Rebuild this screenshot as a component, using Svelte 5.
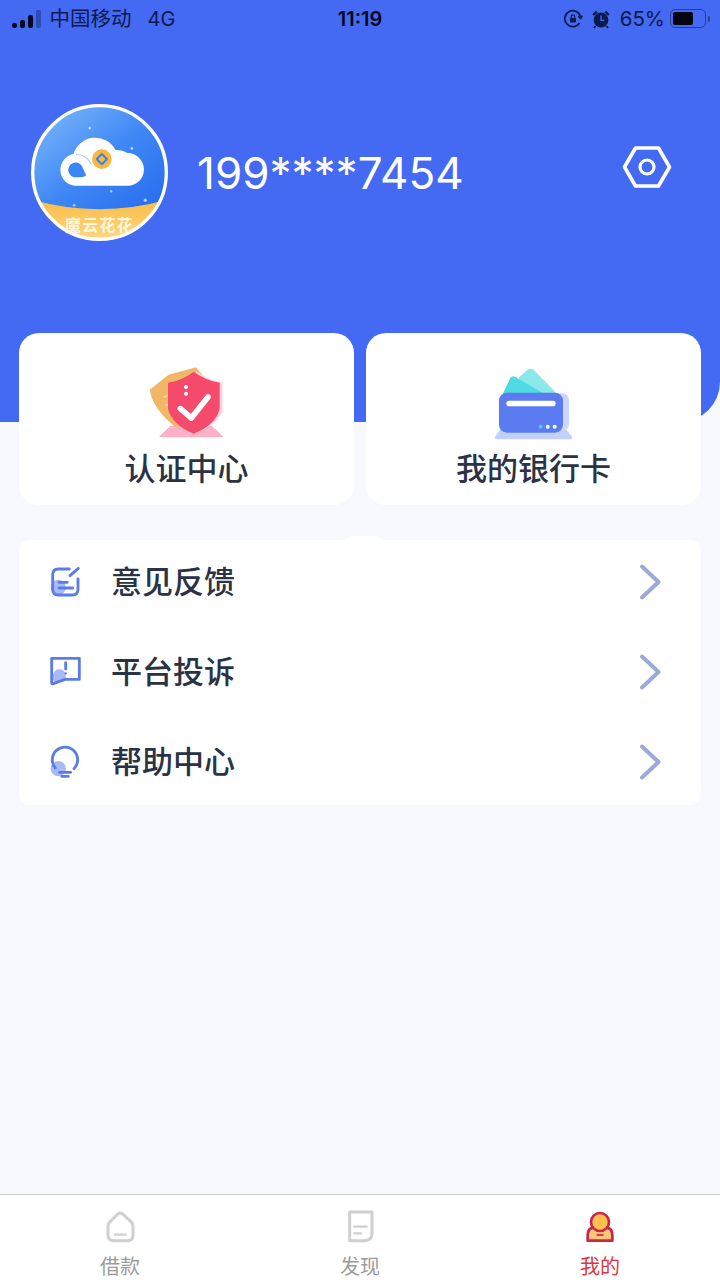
<script lang="ts">
  const menu = ['意见反馈', '平台投诉', '帮助中心'];
</script>

<div class="page">
  <header class="hero">
    <div class="status">
      <div class="status-left">
        <div class="signal"><i class="b1"></i><i class="b2"></i><i class="b3"></i><i class="b4"></i></div>
        <span class="carrier">中国移动</span>
        <span class="net">4G</span>
      </div>
      <div class="time">11:19</div>
      <div class="status-right">
        <svg class="st-ico" width="20" height="20" viewBox="0 0 20 20" fill="none" stroke="#0b1a4d" stroke-width="1.7">
          <path d="M16.5 14A8 8 0 1 1 17.6 8" />
          <path d="M15.2 7.4l2.6 2.2 1.6-3" stroke-width="1.4" />
          <rect x="7" y="9" width="6" height="4.6" rx="1" fill="#0b1a4d" stroke="none" />
          <path d="M8.3 9V7.6a1.7 1.7 0 0 1 3.4 0V9" stroke-width="1.2" />
        </svg>
        <svg class="st-ico" width="20" height="20" viewBox="0 0 20 20">
          <circle cx="10" cy="11" r="7.4" fill="#0b1a4d" />
          <path d="M1.4 5.2 5 1.8 6.6 3.4 3 6.8zM18.6 5.2 15 1.8 13.4 3.4 17 6.8z" fill="#0b1a4d" />
          <path d="M4.6 17 3 19M15.4 17l1.6 2" stroke="#0b1a4d" stroke-width="1.7" />
          <path d="M10 6.5V11.4H13.4" fill="none" stroke="#4469f2" stroke-width="1.3" />
        </svg>
        <span class="pct">65%</span>
        <div class="battery"><div class="level"></div></div>
        <div class="nub"></div>
      </div>
    </div>

    <div class="profile">
      <svg class="avatar" width="137" height="137" viewBox="33 27 410 410">
        <defs>
          <linearGradient id="sky" x1="0.15" y1="0.05" x2="0.8" y2="0.85">
            <stop offset="0" stop-color="#74b2fb" />
            <stop offset="0.5" stop-color="#3f87f5" />
            <stop offset="1" stop-color="#2a6ef0" />
          </linearGradient>
          <linearGradient id="sand" x1="0" y1="0" x2="0" y2="1">
            <stop offset="0" stop-color="#f9bb45" />
            <stop offset="1" stop-color="#ffdc8a" />
          </linearGradient>
          <clipPath id="disc"><circle cx="238" cy="232" r="200" /></clipPath>
        </defs>
        <circle cx="238" cy="232" r="200" fill="url(#sky)" />
        <path clip-path="url(#disc)" d="M30 312Q238 372 446 312V450H30Z" fill="url(#sand)" />
        <circle cx="238" cy="232" r="200" fill="none" stroke="#fff" stroke-width="10" />
        <circle cx="209" cy="99" r="4" fill="#b9dcff" />
        <circle cx="335" cy="160" r="4" fill="#b9dcff" />
        <circle cx="273" cy="288" r="3.5" fill="#a9d0ff" />
        <circle cx="375" cy="315" r="5" fill="#a9d0ff" />
        <circle cx="162" cy="330" r="4" fill="#a9d0ff" />
        <path d="M165 272A48 48 0 0 1 160 177 68 68 0 0 1 286 165 58 58 0 0 1 322 174 49 49 0 0 1 322 272Z" fill="#fff" />
        <path d="M163 246A22 22 0 1 1 186 214L198 240Q192 246 182 246Z" fill="#3c85f5" />
        <path d="M168 178Q200 178 214 208" fill="none" stroke="#a9ccf9" stroke-width="3" />
        <circle cx="245" cy="192" r="31" fill="#f9b93c" stroke="#fff" stroke-width="3" />
        <rect x="231" y="178" width="28" height="28" rx="5" transform="rotate(45 245 192)" fill="#3a7ef2" />
        <rect x="237" y="184" width="16" height="16" rx="2" transform="rotate(45 245 192)" fill="#f9b93c" />
        <text class="brand" x="238" y="408" text-anchor="middle">魔云花花</text>
      </svg>
      <div class="phone">199****7454</div>
      <svg class="gear" width="50" height="44" viewBox="0 0 50 44" fill="none" stroke="#fff" stroke-width="3.6" stroke-linejoin="round">
        <path d="M2.5 22 13.5 3H36.5L47.5 22 36.5 41H13.5Z" />
        <circle cx="25" cy="22" r="7" stroke-width="3.2" />
      </svg>
    </div>
  </header>

  <section class="cards">
    <div class="card">
      <svg width="110" height="100" viewBox="0 0 330 300">
        <path d="M115 222H240L272 252Q274 256 268 256H87Q81 256 83 252Z" fill="#fdb1c6" />
        <path d="M53 113 110 68 192 46 225 85 250 200 130 225Q62 170 53 113Z" fill="#f0b866" />
        <path d="M192 57Q230 85 272 92V180Q250 222 192 243Z" fill="#fcd5df" />
        <path d="M185 59Q225 87 263 92V170Q252 218 185 245 120 218 108 170V92Q148 87 185 59Z" fill="#f54a6c" />
        <path d="M145 170 178 198 228 135" fill="none" stroke="#fff" stroke-width="17" stroke-linecap="round" stroke-linejoin="round" />
        <circle cx="162" cy="105" r="6" fill="#fff" />
        <circle cx="162" cy="125" r="6" fill="#fff" />
        <path d="M95 135 107 130M100 160 108 158" stroke="#fbe1b9" stroke-width="4" />
      </svg>
      <div class="card-label">认证中心</div>
    </div>
    <div class="card">
      <svg width="110" height="100" viewBox="-2 0 330 300">
        <path d="M66 226H254L278 255Q280 262 272 262H52Q44 262 46 255Z" fill="#c3cffb" />
        <rect x="100" y="124" width="168" height="112" rx="20" fill="#ccd6fc" />
        <path d="M118 76 142 54Q152 46 162 54L235 128H120Z" fill="#8be9ea" />
        <path d="M68 128 92 78Q97 70 106 74L198 128Z" fill="#4fd9e2" />
        <rect x="58" y="122" width="192" height="120" rx="24" fill="#5b7cf0" />
        <rect x="80" y="146" width="148" height="17" rx="8.5" fill="#fff" />
        <circle cx="183" cy="224" r="6" fill="#5fc8fb" />
        <circle cx="204" cy="224" r="6" fill="#fff" />
        <circle cx="225" cy="224" r="6" fill="#fff" />
      </svg>
      <div class="card-label">我的银行卡</div>
    </div>
  </section>

  <section class="list">
    {#each menu as label, i}
      <div class="row">
        {#if i === 0}
          <svg width="36" height="36" viewBox="51 27 108 108" fill="none" stroke="#5b7ce8" stroke-width="8.5" stroke-linecap="round">
            <circle cx="85" cy="97" r="23" fill="#a9bbf6" stroke="none" />
            <path d="M118 42H85Q68 42 68 59V103Q68 120 85 120H127Q144 120 144 103V72" />
            <path d="M120 62 145 40M87 82H112M87 99H128" />
          </svg>
        {:else if i === 1}
          <svg width="36" height="36" viewBox="51 299 108 108" fill="none" stroke="#5b7ce8" stroke-width="8.5" stroke-linecap="round" stroke-linejoin="round">
            <path d="M68 376Q68 345 88 344Q108 345 108 372L75 385Z" fill="#a9bbf6" stroke="none" />
            <path d="M65 312H148V375H105L70 388Q65 390 65 385Z" />
            <path d="M107 325V344" />
            <circle cx="107" cy="357" r="3.5" fill="#5b7ce8" stroke="none" />
          </svg>
        {:else}
          <svg width="36" height="36" viewBox="51 566 108 108" fill="none" stroke="#5b7ce8" stroke-width="8.5" stroke-linecap="round">
            <circle cx="85" cy="640" r="23" fill="#a9bbf6" stroke="none" />
            <path d="M76 638A38 38 0 1 1 132 640" />
            <path d="M88 651H122M95 663H115" />
          </svg>
        {/if}
        <span class="row-label">{label}</span>
        <svg class="chevron" width="24" height="36" viewBox="0 0 24 36" fill="none" stroke="#9aa9d6" stroke-width="4" stroke-linecap="round" stroke-linejoin="round">
          <path d="M3 2.5 19.5 18 3 33.5" />
        </svg>
      </div>
    {/each}
  </section>

  <nav class="tabs">
    <div class="tab">
      <svg width="40" height="40" viewBox="60 21 120 120" fill="none" stroke="#d0d0d0" stroke-width="9" stroke-linejoin="round" stroke-linecap="round">
        <path d="M114 42Q121 36 128 42L152 64Q159 70 159 78V106Q159 122 143 122H100Q84 122 84 106V78Q84 70 91 64Z" />
        <path d="M105 104H137" stroke-width="7" />
      </svg>
      <span>借款</span>
    </div>
    <div class="tab">
      <svg width="40" height="40" viewBox="780 21 120 120" fill="none" stroke="#d0d0d0" stroke-width="9" stroke-linejoin="round" stroke-linecap="round">
        <path d="M809 36H876V100Q876 122 854 122H809Z" />
        <path d="M823 80H860M823 100H843" stroke-width="7" />
      </svg>
      <span>发现</span>
    </div>
    <div class="tab on">
      <svg width="40" height="40" viewBox="60 21 120 120" stroke="#c8244c" stroke-width="8" stroke-linejoin="round">
        <path d="M83 122V105Q83 82 106 82H134Q157 82 157 105V122Z" fill="#fcc878" />
        <circle cx="120" cy="66" r="27" fill="#fcc04f" />
        <path d="M110 105H131" stroke-width="5" />
      </svg>
      <span>我的</span>
    </div>
  </nav>
</div>

<style>
  :global(body) {
    background: #f7f9ff;
  }
  .page {
    width: 720px;
    min-height: 1280px;
    display: flex;
    flex-direction: column;
    background: #f7f9ff;
    font-family: "Noto Sans CJK SC", "Liberation Sans", sans-serif;
  }

  /* blue top */
  .hero {
    height: 422px;
    background: #4469f2;
    border-bottom-right-radius: 40px;
  }
  .status {
    height: 37px;
    display: grid;
    grid-template-columns: 1fr auto 1fr;
    align-items: center;
    color: #0b1a4d;
    font-size: 20px;
    font-family: Inter, "Noto Sans CJK SC", sans-serif;
  }
  .status-left {
    display: flex;
    align-items: center;
    padding-left: 12px;
  }
  .signal {
    display: flex;
    align-items: flex-end;
    gap: 3.5px;
    height: 18px;
  }
  .signal i {
    display: block;
    width: 4.5px;
    background: #050a20;
    border-radius: 2px;
  }
  .signal .b1 { height: 5px; }
  .signal .b2 { height: 8px; }
  .signal .b3 { height: 13px; }
  .signal .b4 { height: 18px; background: #2d4bb4; }
  .carrier {
    margin: 0 0 3px 9px;
    font-family: "Noto Sans CJK SC", sans-serif;
    font-size: 20.5px;
    line-height: 24px;
  }
  .net {
    margin-left: 16px;
  }
  .time {
    color: #05081a;
    font-weight: 600;
    font-size: 20px;
  }
  .status-right {
    display: flex;
    align-items: center;
    justify-content: flex-end;
    padding-right: 10px;
  }
  .st-ico {
    margin-right: 8px;
  }
  .pct {
    font-size: 20.5px;
    margin-left: 1px;
    margin-right: 5px;
  }
  .battery {
    width: 36px;
    height: 19px;
    box-sizing: border-box;
    border: 1.5px solid #24408f;
    border-radius: 5px;
    padding: 2px;
  }
  .level {
    width: 20px;
    height: 100%;
    background: #03060f;
    border-radius: 2px;
  }
  .nub {
    width: 2px;
    height: 6px;
    margin-left: 2px;
    background: #24408f;
    border-radius: 0 2px 2px 0;
  }

  .profile {
    display: flex;
    align-items: center;
    margin-top: 67px;
    padding: 0 48px 0 31px;
  }
  .avatar {
    flex: none;
  }
  .brand {
    font-size: 48px;
    font-weight: 700;
    fill: #fff6e0;
    letter-spacing: 4px;
  }
  .phone {
    flex: 1;
    margin-left: 29px;
    color: #fff;
    font-family: Inter, "Liberation Sans", sans-serif;
    font-size: 44px;
    line-height: 50px;
  }
  .gear {
    flex: none;
    margin-bottom: 12px;
  }

  /* two cards overlapping the blue */
  .cards {
    display: flex;
    gap: 12px;
    margin: -89px 19px 0;
    position: relative;
  }
  .card {
    flex: 1;
    height: 172px;
    box-sizing: border-box;
    padding-top: 19px;
    background: #fff;
    border-radius: 20px;
    display: flex;
    flex-direction: column;
    align-items: center;
  }
  .card svg {
    flex: none;
  }
  .card-label {
    margin-top: -4px;
    color: #2a3345;
    font-size: 31px;
    font-weight: 500;
    line-height: 38px;
  }

  .list {
    position: relative;
    margin: 35px 19px 0;
    background: #fff;
    border-radius: 10px;
    height: 265px;
  }
  .list::before {
    content: "";
    position: absolute;
    top: -4px;
    left: 325px;
    width: 40px;
    height: 10px;
    background: #fff;
    border-radius: 14px 14px 0 0;
  }
  .row {
    position: relative;
    height: 90px;
    display: flex;
    align-items: center;
    padding: 0 38px 0 28px;
  }
  .row:first-child {
    margin-top: -3px;
  }
  .row-label {
    flex: 1;
    margin: 0 0 6px 28px;
    color: #2a3345;
    font-size: 31px;
    font-weight: 500;
  }
  .chevron {
    flex: none;
  }

  /* bottom tabs */
  .tabs {
    margin-top: auto;
    height: 86px;
    box-sizing: border-box;
    border-top: 1px solid #cfcfcf;
    background: #fff;
    display: flex;
  }
  .tab {
    flex: 1;
    display: flex;
    flex-direction: column;
    align-items: center;
    padding-top: 12px;
    color: #9b9b9b;
    font-size: 20px;
    line-height: 26px;
  }
  .tab span {
    margin-top: 6px;
  }
  .tab.on {
    color: #d8383f;
  }
</style>
